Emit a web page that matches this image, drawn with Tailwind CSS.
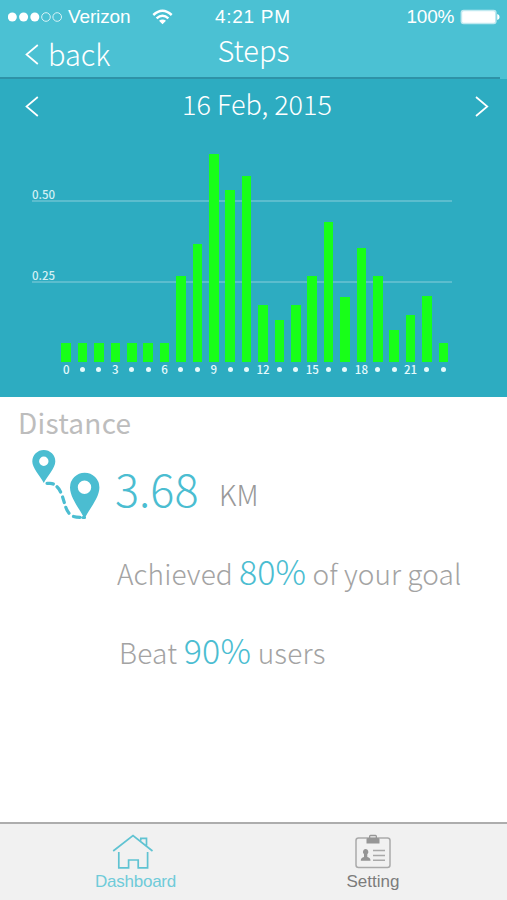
<!DOCTYPE html>
<html lang="en">
<head>
<meta charset="utf-8">
<title>Steps</title>
<script src="https://cdn.jsdelivr.net/npm/@tailwindcss/browser@4"></script>
</head>
<body class="w-[507px] h-[900px] overflow-hidden bg-white font-['Noto_Sans_CJK_SC','Noto_Sans',sans-serif] flex flex-col">
<header class="h-[79px] shrink-0 bg-[#4bc1d3] text-white flex flex-col">
  <div class="h-[34px] grid grid-cols-[207px_1fr_auto] items-center pl-2 pr-[7px] font-['Liberation_Sans',sans-serif] text-[19px] leading-[34px]">
    <div class="flex items-center">
      <svg class="w-[55px] h-[12px]" viewBox="0 0 55 12" fill="none"><g fill="#fff"><circle cx="4.3" cy="6" r="4.5"/><circle cx="15.6" cy="6" r="4.5"/><circle cx="26.8" cy="6" r="4.5"/></g><g stroke="#d9f3f7" stroke-width="1"><circle cx="38" cy="6" r="4.3"/><circle cx="49.2" cy="6" r="4.3"/></g></svg>
      <span class="ml-[5px] w-[63px] tracking-[-0.15px]">Verizon</span>
      <svg class="ml-[21px] w-[21px] h-[16px]" viewBox="0 0 21 16" fill="none" stroke="#fff" stroke-width="2.5"><path d="M1.3 6Q10.5 -2.4 19.7 6M4.6 9.4Q10.5 4.2 16.4 9.4"/><path d="M7 11.8Q10.5 9 14 11.8L10.5 15.2Z" fill="#fff" stroke="none"/></svg>
    </div>
    <span class="tracking-[0.7px]">4:21 PM</span>
    <div class="flex items-center justify-end"><span class="tracking-[-0.3px]">100%</span>
      <svg class="ml-[6px] w-[40px] h-[16px]" viewBox="0 0 40 16"><rect x=".6" y=".7" width="36" height="14.6" rx="3" fill="#fff" fill-opacity=".65"/><rect x="2.2" y="2.2" width="32.8" height="11.6" rx="1.5" fill="#fff"/><path d="M37.2 5Q39.6 5.5 39.6 8T37.2 11Z" fill="#fff"/></svg>
    </div>
  </div>
  <div class="h-[43px] grid grid-cols-[1fr_auto_1fr] items-start font-light">
    <div class="flex items-start pl-[25px]">
      <svg class="mt-[10px] w-[14px] h-[21px]" viewBox="0 0 14 21" fill="none" stroke="#fff" stroke-width="1.7"><path d="M12.8 1L1.5 10.5L12.8 20"/></svg>
      <span class="ml-[9px] mt-[1px] text-[29px] leading-[36px]">back</span>
    </div>
    <span class="text-[29px] leading-[30px]">Steps</span>
  </div>
  <div class="mr-[7px] h-[2px] bg-[#2e92a7]"></div>
</header>

<section class="h-[318px] shrink-0 bg-[#2dacc1] text-white flex flex-col">
  <div class="h-[54px] pl-[25px] pr-[18px] grid grid-cols-[14px_1fr_14px] items-center">
    <svg class="w-[14px] h-[21px]" viewBox="0 0 14 21" fill="none" stroke="#fff" stroke-width="1.7"><path d="M12.8 1L1.5 10.5L12.8 20"/></svg>
    <span class="-mt-[5px] text-center text-[27px] leading-[36px] font-light">16 Feb, 2015</span>
    <svg class="w-[14px] h-[21px]" viewBox="0 0 14 21" fill="none" stroke="#fff" stroke-width="1.7"><path d="M1 1L12.3 10.5L1 20"/></svg>
  </div>
  <div class="mx-[32px] mr-[55px] grid h-[229px]">
    <div class="col-start-1 row-start-1 flex flex-col text-[11.5px] font-medium leading-[14px] text-[#d2f0f4] pt-[54px]">
      <div class="h-[13px]">0.50</div><div class="h-[2px] bg-[#5bbdce]"></div>
      <div class="h-[13px] mt-[66px]">0.25</div><div class="h-[2px] bg-[#5bbdce]"></div>
    </div>
    <div class="col-start-1 row-start-1 ml-[26px] w-[393.6px] grid grid-cols-24 items-end justify-items-center [&>i]:w-[9.6px] [&>i]:bg-[#18ff18]">
      <i class="h-[19.5px]"></i><i class="h-[19.5px]"></i><i class="h-[19.5px]"></i><i class="h-[19.5px]"></i><i class="h-[19.5px]"></i><i class="h-[19.5px]"></i><i class="h-[19.5px]"></i><i class="h-[86px]"></i><i class="h-[118.5px]"></i><i class="h-[208px]"></i><i class="h-[172px]"></i><i class="h-[186px]"></i><i class="h-[57.5px]"></i><i class="h-[42.5px]"></i><i class="h-[57.5px]"></i><i class="h-[86px]"></i><i class="h-[140.5px]"></i><i class="h-[65px]"></i><i class="h-[114.5px]"></i><i class="h-[86px]"></i><i class="h-[32.5px]"></i><i class="h-[47.5px]"></i><i class="h-[66px]"></i><i class="h-[19px]"></i>
    </div>
  </div>
  <div class="ml-[58px] w-[393.6px] h-[15px] grid grid-cols-24 items-center justify-items-center text-[11.5px] font-medium leading-[15px] text-[#e4fafc] [&>b]:w-[5px] [&>b]:h-[5px] [&>b]:rounded-full [&>b]:bg-[#e4fafc]">
    <span>0</span><b></b><b></b><span>3</span><b></b><b></b><span>6</span><b></b><b></b><span>9</span><b></b><b></b><span>12</span><b></b><b></b><span>15</span><b></b><b></b><span>18</span><b></b><b></b><span>21</span><b></b><b></b>
  </div>
</section>

<main class="flex-1 min-h-0 font-light text-[#a3a3a3]">
  <h1 class="pt-[7px] pl-[18px] text-[28px] leading-[36px] font-normal tracking-[0.25px] text-[#bdbdbd]">Distance</h1>
  <div class="flex h-[76px] pl-[31px]">
    <svg class="mt-[9px] w-[70px] h-[72px] shrink-0" viewBox="0 0 70 72"><g fill="#4bbdd1" fill-rule="evenodd"><path d="M12.8 34C9 27 1.3 19 1.3 12.5a11.5 11.5 0 0 1 23 0C24.3 19 16.6 27 12.8 34ZM12.8 7.5a4.7 4.7 0 1 0 0 9.4a4.7 4.7 0 0 0 0-9.4Z"/><path d="M53.5 70C49 60 39 49 39 38.5a14.7 14.7 0 0 1 29.4 0C68.4 49 58 60 53.5 70ZM53.5 31.5a6.7 6.7 0 1 0 0 13.4a6.7 6.7 0 0 0 0-13.4Z"/></g><path d="M16 34.3H19Q21 34.3 22.3 35M26 37.8Q28.2 39.8 29.6 43M31.6 48L33.3 53.5M34.8 58.3Q36 61.8 38 64.2M42.5 67.5Q45 68.3 49 68.3M52 68.5H53.5" fill="none" stroke="#4bbdd1" stroke-width="3.2" stroke-linecap="round"/></svg>
    <span class="ml-[14px] mt-[20px] text-[45px] leading-[56px] text-[#4bbdd1] h-[56px] w-[91px] font-extralight">3.68</span>
    <span class="ml-[13px] mt-[34px] text-[28px] leading-[40px] text-[#999]">KM</span>
  </div>
  <p class="mt-[31px] pl-[117px] leading-[48px] h-[48px] text-[28px] tracking-[0.08px] whitespace-nowrap">Achieved <span class="text-[34px] text-[#4bbdd1]">80%</span> of your goal</p>
  <p class="mt-[31px] pl-[119px] leading-[48px] h-[48px] text-[28px] tracking-[0.22px] whitespace-nowrap">Beat <span class="text-[34px] text-[#4bbdd1]">90%</span> users</p>
</main>

<footer class="h-[78px] shrink-0 border-t-2 border-[#adadad] bg-[#f1f1f1] grid grid-cols-[271px_1fr] font-['Liberation_Sans',sans-serif] text-[17px] leading-[20px]">
  <div class="flex flex-col items-center pt-[10px] text-[#6fcbd9]">
    <svg class="-ml-[5px] w-[42px] h-[36px]" viewBox="0 0 42 36" fill="none" stroke="#60c3d2" stroke-width="1.7"><path d="M1.2 17L21 1.5L40.5 17M28.8 6.5V4.3H34.5V11.5M6.8 18V33.8H16.6V26H26.2V33.8H35.6V18"/></svg>
    <span class="mt-[2px] tracking-[-0.25px]">Dashboard</span>
  </div>
  <div class="flex flex-col items-center pt-[10px] pr-[32px] text-[#7c7c7c]">
    <svg class="w-[36px] h-[36px]" viewBox="0 0 36 36"><rect x="1" y="4" width="34" height="29.5" rx="2.5" fill="none" stroke="#aaa" stroke-width="1.5"/><path d="M11.5 9.5V5Q11.5 4 13 4H14V2.5Q14 .8 15.5 .8H20.5Q22 .8 22 2.5V4H23Q24.5 4 24.5 5V9.5ZM15.3 4H20.7V2.2H15.3Z" fill="#969696" fill-rule="evenodd"/><path d="M10.6 15a2.7 2.9 0 0 1 1.7 5.2V23Q15.5 23.5 15.5 26.7H5.8Q5.8 23.5 9 23V20.2A2.7 2.9 0 0 1 10.6 15Z" fill="#949494"/><path d="M18 16.5H30M18 21.5H30M18 26.2H30" stroke="#a9a9a9" stroke-width="1.6"/></svg>
    <span class="mt-[2px]">Setting</span>
  </div>
</footer>
</body>
</html>
